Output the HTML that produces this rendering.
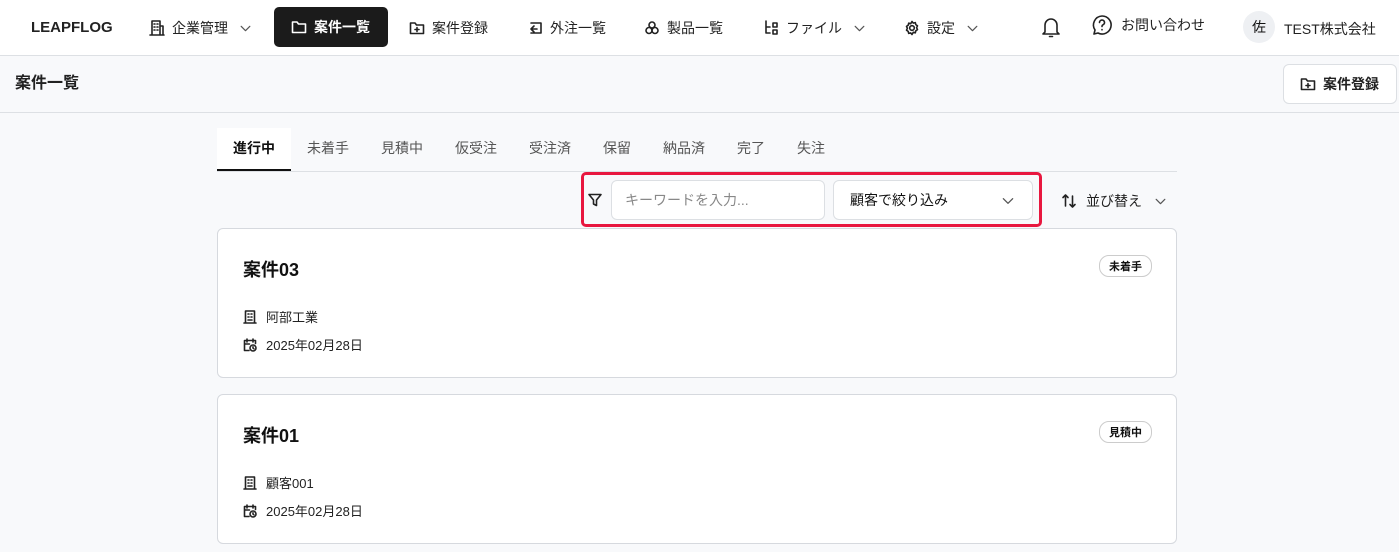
<!DOCTYPE html><html><head><meta charset="utf-8"><style>
*{box-sizing:border-box;margin:0;padding:0}
body{width:1399px;height:552px;overflow:hidden;background:#f8f9fb;font-family:"Liberation Sans","Noto Sans CJK JP",sans-serif;color:#111;font-size:14px}
.hdr{position:absolute;left:0;top:0;width:1399px;height:56px;background:#fff;border-bottom:1px solid #dde0e4}
.a{position:absolute;display:flex;align-items:center;gap:7px;font-size:14px;color:#222;white-space:nowrap}
svg{fill:none;stroke:currentColor;stroke-width:1.6;stroke-linecap:round;stroke-linejoin:round}
svg.ch{stroke-width:1.1;color:#555}
.sub{position:absolute;left:0;top:56px;width:1399px;height:57px;border-bottom:1px solid #dde0e4}
.tab{position:absolute;top:128px;height:43px;line-height:40px;font-size:14px;color:#555;text-align:center}
.card{position:absolute;left:217px;width:960px;height:150px;background:#fff;border:1px solid #d6d9de;border-radius:6px}
.card h2{position:absolute;left:25px;top:27px;font-size:18px;font-weight:bold}
.badge{position:absolute;right:24px;top:26px;border:1px solid #ccc;border-radius:10px;font-size:11px;font-weight:bold;padding:2px 9px}
.row{position:absolute;left:25px;display:flex;align-items:center;gap:9px;font-size:13px;color:#222}
</style></head><body>
<div class="hdr">
<div class="a" style="left:31px;top:19px;font-weight:bold;font-size:15px">LEAPFLOG</div>
<div class="a" style="left:149px;top:18px"><svg width="16" height="16" viewBox="0 0 16 16"><path d="M3 15V1h8v14M11 6h3v9M1 15h14M5 4h1M8 4h1M5 7h1M8 7h1M5 10h1M8 10h1"/></svg>企業管理 <svg class="ch" width="13" height="13" viewBox="0 0 12 12" style="margin-left:4px"><path d="M2 4l4 4 4-4"/></svg></div>
<div class="a" style="left:274px;top:7px;width:114px;height:40px;background:#1b1b1b;color:#fff;border-radius:5px;padding-left:17px;font-weight:bold"><svg width="16" height="16" viewBox="0 0 16 16"><path d="M1.5 3h4.5l1.5 2h7v8.5h-13z"/></svg>案件一覧</div>
<div class="a" style="left:409px;top:18px"><svg width="16" height="16" viewBox="0 0 16 16"><path d="M1.5 3h4.5l1.5 2h7v8.5h-13zM8 7.5v4M6 9.5h4"/></svg>案件登録</div>
<div class="a" style="left:527px;top:18px"><svg width="16" height="16" viewBox="0 0 16 16"><path d="M4 3h10v10H4M7 6l-3 3 3 3M4 9h6"/></svg>外注一覧</div>
<div class="a" style="left:644px;top:18px"><svg width="16" height="16" viewBox="0 0 16 16"><circle cx="8" cy="5" r="3"/><circle cx="5" cy="10.5" r="3"/><circle cx="11" cy="10.5" r="3"/></svg>製品一覧</div>
<div class="a" style="left:763px;top:18px"><svg width="16" height="16" viewBox="0 0 16 16"><path d="M3 1v12h4M3 7h4M10 3h4v4h-4zM10 10h4v4h-4z"/></svg>ファイル <svg class="ch" width="13" height="13" viewBox="0 0 12 12" style="margin-left:4px"><path d="M2 4l4 4 4-4"/></svg></div>
<div class="a" style="left:904px;top:18px"><svg width="16" height="16" viewBox="0 0 16 16"><circle cx="8" cy="8" r="2.3"/><path d="M8 1.5l1.3 1.6 2-.5.5 2 1.7 1.2-.9 1.9.9 1.9-1.7 1.2-.5 2-2-.5L8 14.5 6.7 12.9l-2 .5-.5-2-1.7-1.2.9-1.9-.9-1.9 1.7-1.2.5-2 2 .5z"/></svg>設定 <svg class="ch" width="13" height="13" viewBox="0 0 12 12" style="margin-left:4px"><path d="M2 4l4 4 4-4"/></svg></div>
<div class="a" style="left:1040px;top:15px"><svg width="22" height="24" viewBox="0 0 22 24"><path d="M5 17V10a6 6 0 0 1 12 0v7l2 2H3zM9.5 21.5h3"/></svg></div>
<div class="a" style="left:1091px;top:14px;gap:8px"><svg width="22" height="22" viewBox="0 0 22 22"><path d="M11 2a9 9 0 1 1-4 17l-4 1 1-4A9 9 0 0 1 11 2zM8.5 8.5a2.5 2.5 0 1 1 3.5 2.3c-.7.3-1 .9-1 1.7M11 15.5v.3"/></svg>お問い合わせ</div>
<div style="position:absolute;left:1243px;top:11px;width:32px;height:32px;border-radius:16px;background:#eef0f3;text-align:center;line-height:32px;font-size:14px">佐</div>
<div class="a" style="left:1284px;top:19px">TEST株式会社</div>
</div>
<div class="sub">
<div class="a" style="left:15px;top:13px;font-size:16px;font-weight:bold">案件一覧</div>
<div class="a" style="left:1283px;top:8px;width:114px;height:40px;background:#fff;border:1px solid #dcdfe3;border-radius:6px;padding-left:16px;font-weight:bold;font-size:14px"><svg width="16" height="16" viewBox="0 0 16 16"><path d="M1.5 3h4.5l1.5 2h7v8.5h-13zM8 7.5v4M6 9.5h4"/></svg>案件登録</div>
</div>
<div style="position:absolute;left:217px;top:171px;width:960px;height:1px;background:#dde0e4"></div>
<div class="tab" style="left:217px;width:74px;background:#fff;color:#111;border-bottom:2px solid #111;font-weight:bold">進行中</div>
<div class="tab" style="left:291px;width:74px">未着手</div>
<div class="tab" style="left:365px;width:74px">見積中</div>
<div class="tab" style="left:439px;width:74px">仮受注</div>
<div class="tab" style="left:513px;width:74px">受注済</div>
<div class="tab" style="left:587px;width:60px">保留</div>
<div class="tab" style="left:647px;width:74px">納品済</div>
<div class="tab" style="left:721px;width:60px">完了</div>
<div class="tab" style="left:781px;width:60px">失注</div>
<div style="position:absolute;left:581px;top:172px;width:461px;height:55px;border:3px solid #e8173f;border-radius:5px"></div>
<div class="a" style="left:587px;top:192px"><svg width="16" height="16" viewBox="0 0 16 16"><path d="M2 2.5h12L9.5 8v5.5L6.5 12V8z"/></svg></div>
<div style="position:absolute;left:611px;top:180px;width:214px;height:40px;background:#fff;border:1px solid #dcdfe3;border-radius:6px;padding-left:13px;line-height:38px;color:#888;font-size:14px">キーワードを入力...</div>
<div style="position:absolute;left:833px;top:180px;width:200px;height:40px;background:#fff;border:1px solid #dcdfe3;border-radius:6px;padding-left:16px;line-height:38px;font-size:14px">顧客で絞り込み<svg class="ch" width="14" height="14" viewBox="0 0 12 12" style="position:absolute;right:17px;top:13px"><path d="M2 4l4 4 4-4"/></svg></div>
<div class="a" style="left:1061px;top:191px;gap:9px"><svg width="16" height="16" viewBox="0 0 16 16"><path d="M4.5 13V2M2 4.5 4.5 2 7 4.5M11.5 3v11M9 11.5l2.5 2.5 2.5-2.5"/></svg>並び替え <svg class="ch" width="13" height="13" viewBox="0 0 12 12" style="margin-left:3px"><path d="M2 4l4 4 4-4"/></svg></div>
<div class="card" style="top:228px"><h2>案件03</h2><div class="badge">未着手</div>
<div class="row" style="top:78px"><svg width="14" height="14" viewBox="0 0 14 14"><path d="M2.5 13V1h9v12M1 13h12M5 4h1M8 4h1M5 7h1M8 7h1M5 10h4"/></svg>阿部工業</div>
<div class="row" style="top:106px"><svg width="14" height="14" viewBox="0 0 14 14"><path d="M6 12.5H1.5v-10h11v3M4 1v3M10 1v3M1.5 6h5"/><circle cx="10" cy="10" r="3"/><path d="M10 8.8V10l.8.7"/></svg>2025年02月28日</div></div>
<div class="card" style="top:394px"><h2>案件01</h2><div class="badge">見積中</div>
<div class="row" style="top:78px"><svg width="14" height="14" viewBox="0 0 14 14"><path d="M2.5 13V1h9v12M1 13h12M5 4h1M8 4h1M5 7h1M8 7h1M5 10h4"/></svg>顧客001</div>
<div class="row" style="top:106px"><svg width="14" height="14" viewBox="0 0 14 14"><path d="M6 12.5H1.5v-10h11v3M4 1v3M10 1v3M1.5 6h5"/><circle cx="10" cy="10" r="3"/><path d="M10 8.8V10l.8.7"/></svg>2025年02月28日</div></div>
</body></html>
